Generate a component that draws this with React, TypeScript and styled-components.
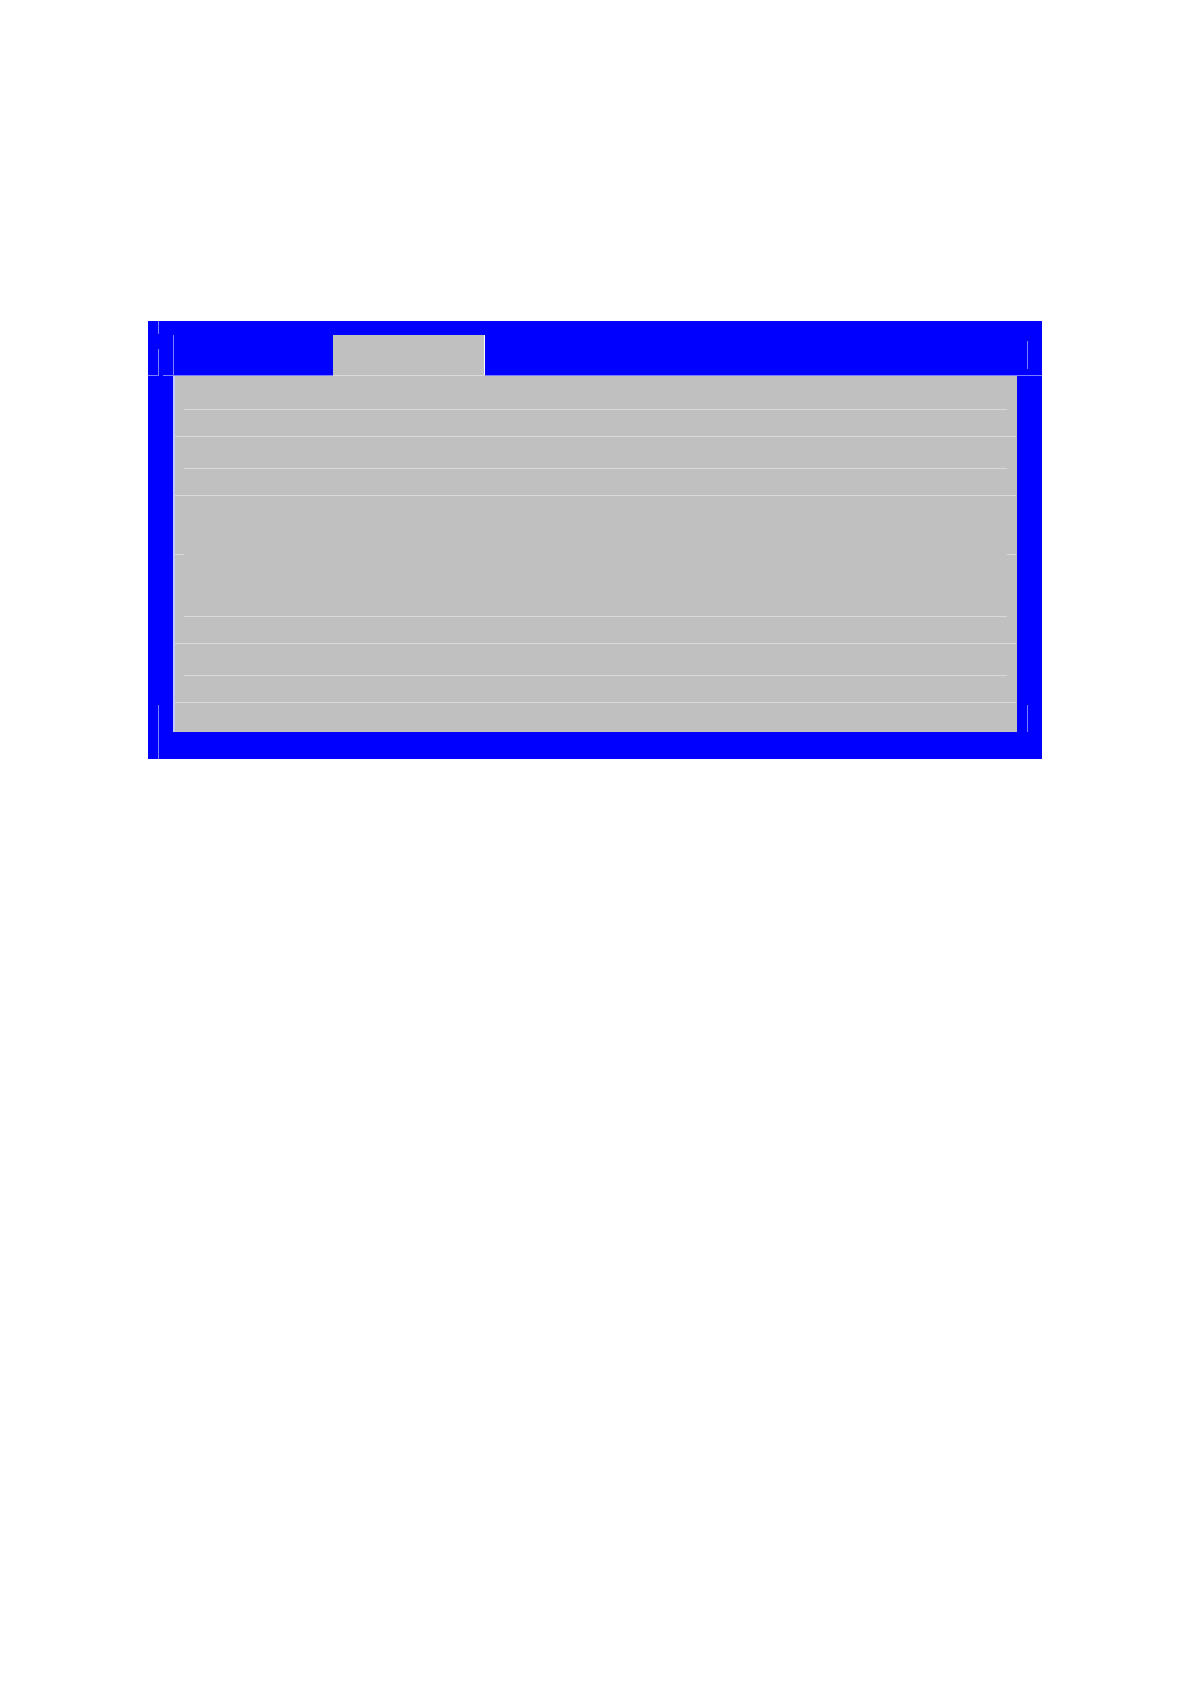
import React from "react";
import styled, { createGlobalStyle } from "styled-components";

const BLUE = "#0000ff";
const GRAY = "#c0c0c0";
const BLUE_LINE = "#7c7cff";
const GRAY_LINE = "#d9d9d9";

const GlobalStyle = createGlobalStyle`
  body {
    margin: 0;
    background: #ffffff;
    font-family: "Liberation Sans", Arial, sans-serif;
  }
`;

const Page = styled.main`
  box-sizing: border-box;
  min-height: 100vh;
  padding: 321px 148px 0;
`;

const Window = styled.section`
  background: ${BLUE};
`;

const Header = styled.header`
  display: flex;
  height: 54px;
`;

const Gutter = styled.div`
  display: flex;
  flex: 0 0 25px;
  flex-direction: column;
  box-sizing: border-box;
  padding-left: 10px;
`;

const Stroke = styled.div<{ $height: number; $top?: number }>`
  width: 1px;
  height: ${(p) => p.$height}px;
  margin-top: ${(p) => p.$top ?? 0}px;
  background: ${BLUE_LINE};
`;

const TabStrip = styled.div`
  flex: 1;
  margin-top: 14px;
  border-left: 1px solid ${BLUE_LINE};
`;

const Tab = styled.div`
  box-sizing: border-box;
  width: 152px;
  height: 100%;
  margin-left: 159px;
  background: ${GRAY};
  border-right: 1px solid #ffffff;
`;

const Baseline = styled.div`
  display: flex;
  gap: 4px;
  height: 1px;
`;

const BaselineStart = styled.div`
  width: 11px;
  background: ${BLUE_LINE};
`;

const BaselineRest = styled.div`
  display: flex;
  flex: 1;
  padding-left: 170px;
  background: ${BLUE_LINE};
`;

const TabBase = styled.div`
  width: 152px;
  background: ${GRAY_LINE};
`;

const Body = styled.div`
  display: flex;
`;

const BodyGutter = styled(Gutter)`
  justify-content: flex-end;
`;

const Panel = styled.div`
  flex: 1;
  padding-bottom: 29px;
  background: ${GRAY};
  border-left: 2px solid #c2caff;
`;

const Row = styled.div<{ $height: number }>`
  height: ${(p) => p.$height}px;
`;

const FullLine = styled.div`
  height: 1px;
  margin-right: 1px;
  background: ${GRAY_LINE};
`;

const InnerLine = styled.div`
  height: 1px;
  margin: 0 10px 0 9px;
  background: ${GRAY_LINE};
`;

const EdgeLine = styled.div`
  display: flex;
  justify-content: space-between;
  height: 1px;
  margin-right: 1px;

  &::before,
  &::after {
    content: "";
    width: 9px;
    background: ${GRAY_LINE};
  }
`;

const Footer = styled.footer`
  height: 27px;
  padding-left: 10px;
`;

type RowSpec = { height: number; line: "inner" | "full" | "edge" };

const rows: RowSpec[] = [
  { height: 33, line: "inner" },
  { height: 26, line: "full" },
  { height: 31, line: "inner" },
  { height: 26, line: "full" },
  { height: 58, line: "edge" },
  { height: 61, line: "inner" },
  { height: 26, line: "full" },
  { height: 31, line: "inner" },
  { height: 26, line: "full" },
];

const lines = { inner: InnerLine, full: FullLine, edge: EdgeLine };

export default function App() {
  return (
    <Page>
      <GlobalStyle />
      <Window>
        <Header>
          <Gutter>
            <Stroke $height={13} />
            <Stroke $height={26} $top={15} />
          </Gutter>
          <TabStrip>
            <Tab />
          </TabStrip>
          <Gutter>
            <Stroke $height={28} $top={20} />
          </Gutter>
        </Header>
        <Baseline>
          <BaselineStart />
          <BaselineRest>
            <TabBase />
          </BaselineRest>
        </Baseline>
        <Body>
          <BodyGutter>
            <Stroke $height={27} />
          </BodyGutter>
          <Panel>
            {rows.map(({ height, line }, index) => {
              const Line = lines[line];
              return (
                <React.Fragment key={index}>
                  <Row $height={height} />
                  <Line />
                </React.Fragment>
              );
            })}
          </Panel>
          <BodyGutter>
            <Stroke $height={27} />
          </BodyGutter>
        </Body>
        <Footer>
          <Stroke $height={27} />
        </Footer>
      </Window>
    </Page>
  );
}
